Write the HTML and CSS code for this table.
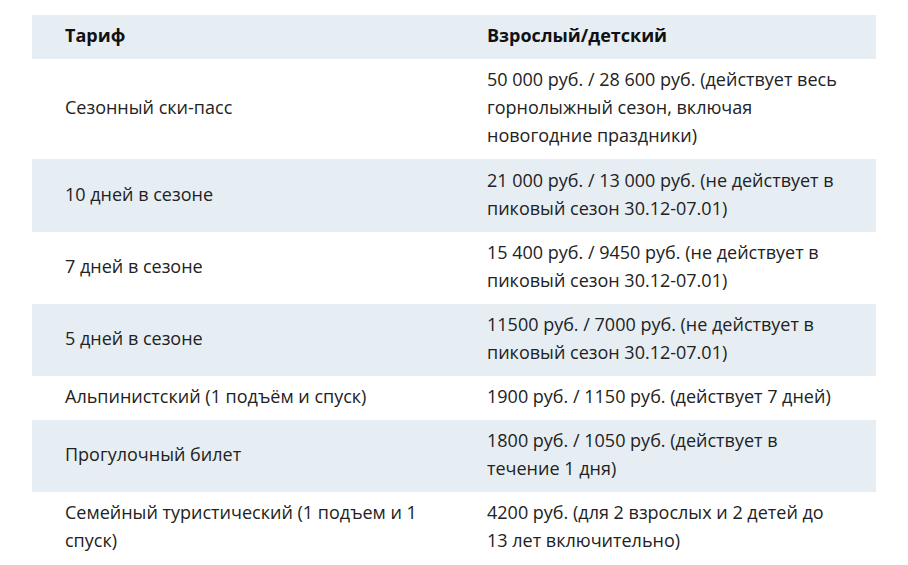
FILE: index.html
```html
<!DOCTYPE html>
<html lang="ru">
<head>
<meta charset="utf-8">
<link rel="stylesheet" href="styles.css">
</head>
<body>
<table class="tariffs">
  <thead>
    <tr><th>Тариф</th><th>Взрослый/детский</th></tr>
  </thead>
  <tbody>
    <tr><td>Сезонный ски-пасс</td><td>50 000 руб. / 28 600 руб. (действует весь горнолыжный сезон, включая новогодние праздники)</td></tr>
    <tr><td>10 дней в сезоне</td><td>21 000 руб. / 13 000 руб. (не действует в пиковый сезон 30.12-07.01)</td></tr>
    <tr><td>7 дней в сезоне</td><td>15 400 руб. / 9450 руб. (не действует в пиковый сезон 30.12-07.01)</td></tr>
    <tr><td>5 дней в сезоне</td><td>11500 руб. / 7000 руб. (не действует в пиковый сезон 30.12-07.01)</td></tr>
    <tr><td>Альпинистский (1 подъём и спуск)</td><td>1900 руб. / 1150 руб. (действует 7 дней)</td></tr>
    <tr><td>Прогулочный билет</td><td>1800 руб. / 1050 руб. (действует в течение 1 дня)</td></tr>
    <tr><td>Семейный туристический (1 подъем и 1 спуск)</td><td>4200 руб. (для 2 взрослых и 2 детей до 13 лет включительно)</td></tr>
  </tbody>
</table>
</body>
</html>
```
FILE: styles.css
```css
html, body {
  margin: 0;
  padding: 0;
  background: #ffffff;
}
body {
  padding: 15px 32px 0 32px;
  font-family: "Open Sans", "Noto Sans", sans-serif;
  font-size: 18px;
  line-height: 28px;
  color: #222222;
}
.tariffs {
  width: 844px;
  border-collapse: collapse;
  table-layout: fixed;
}
.tariffs th,
.tariffs td {
  width: 50%;
  padding: 6px 33px 10px 33px;
  text-align: left;
  vertical-align: middle;
}
.tariffs td {
  font-weight: 400;
}
.tariffs th {
  font-weight: 700;
  color: #111111;
}
.tariffs thead tr {
  background: #e6eef4;
}
.tariffs tbody tr:nth-child(even) {
  background: #e6eef4;
}
.tariffs tbody tr:first-child {
  border-bottom: 1px solid #e6eef4;
}
```
